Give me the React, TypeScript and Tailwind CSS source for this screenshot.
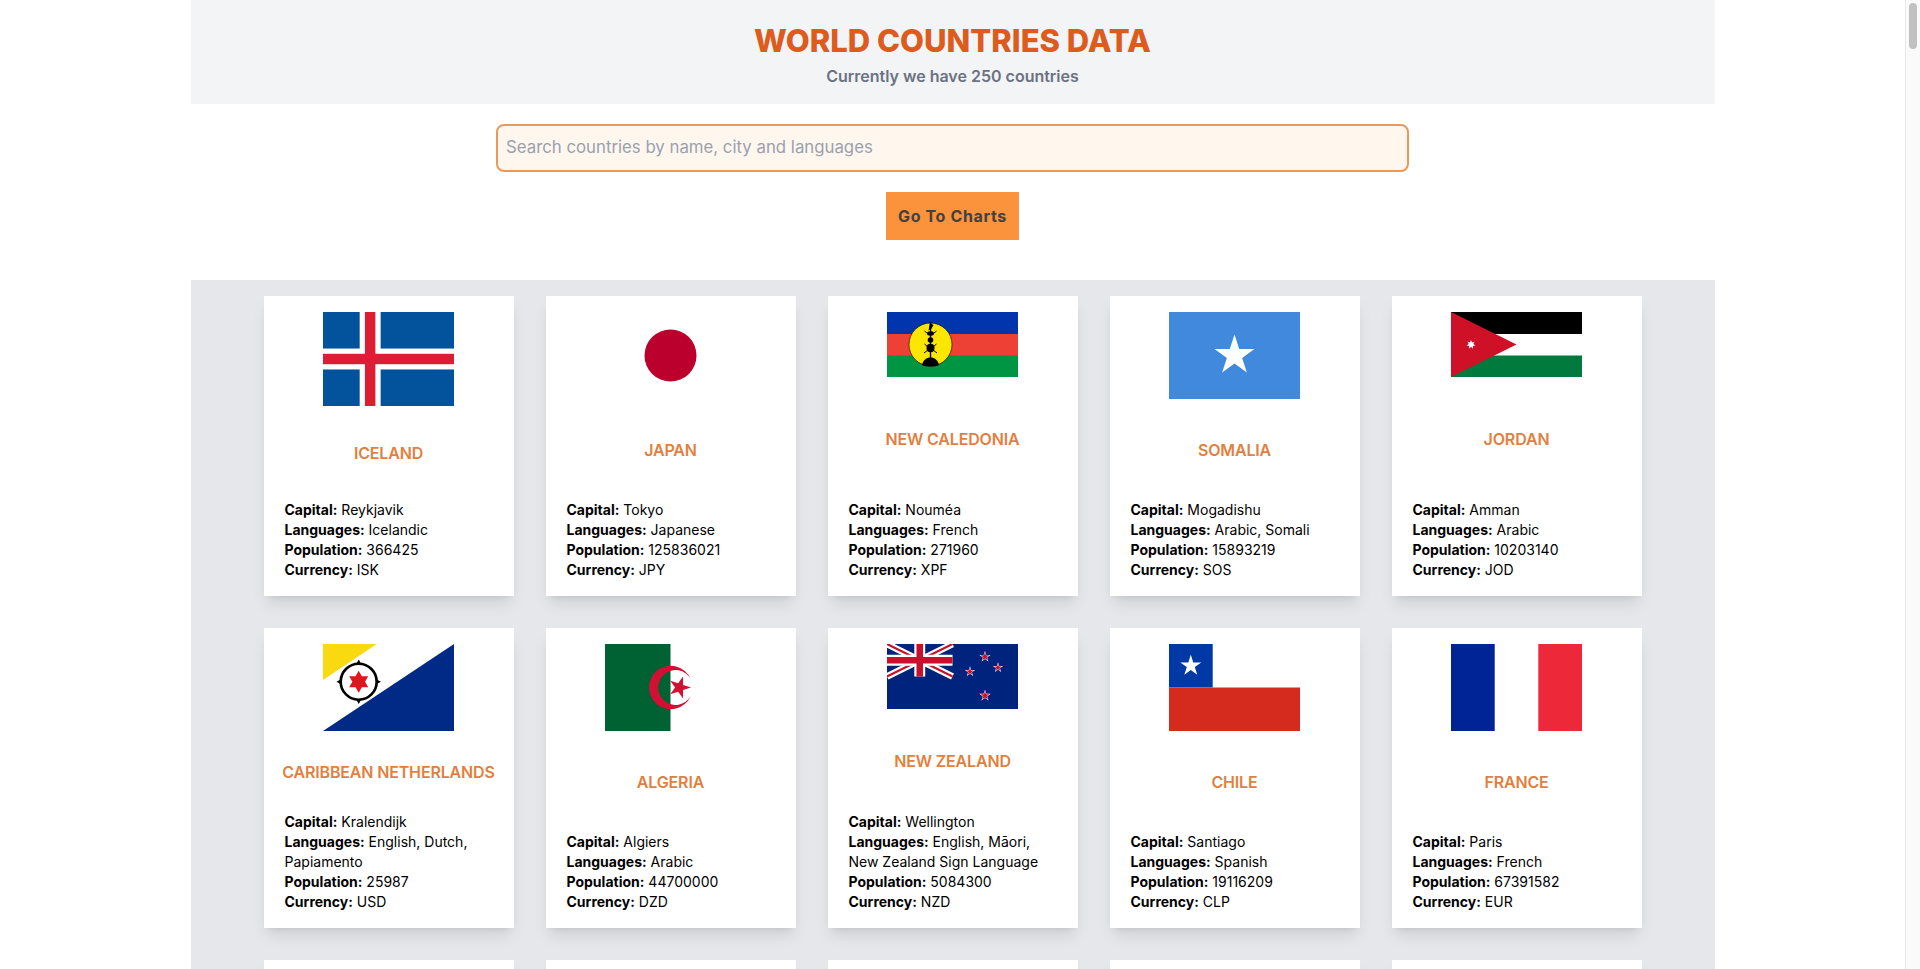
import type { ReactNode } from "react";

function starPoints(cx: number, cy: number, r: number, n = 5, inner = 0.382) {
  const pts: string[] = [];
  for (let i = 0; i < n * 2; i++) {
    const rad = i % 2 === 0 ? r : r * inner;
    const a = -Math.PI / 2 + (i * Math.PI) / n;
    pts.push(`${(cx + rad * Math.cos(a)).toFixed(2)},${(cy + rad * Math.sin(a)).toFixed(2)}`);
  }
  return pts.join(" ");
}

const Iceland = (
  <svg className="block" width="131" height="94" viewBox="0 0 25 18" preserveAspectRatio="none">
    <rect width="25" height="18" fill="#02529c" />
    <rect x="7" width="4" height="18" fill="#fff" />
    <rect y="7" width="25" height="4" fill="#fff" />
    <rect x="8" width="2" height="18" fill="#dc1e35" />
    <rect y="8" width="25" height="2" fill="#dc1e35" />
  </svg>
);

const Japan = (
  <svg className="block" width="131" height="87" viewBox="0 0 131 87">
    <rect width="131" height="87" fill="#fff" />
    <circle cx="65.5" cy="43.5" r="26" fill="#bc002d" />
  </svg>
);

const NewCaledonia = (
  <svg className="block" width="131" height="65" viewBox="0 0 131 65">
    <rect width="131" height="22" fill="#0035ad" />
    <rect y="22" width="131" height="22" fill="#ed4135" />
    <rect y="43.5" width="131" height="21.5" fill="#009543" />
    <circle cx="43.5" cy="32.5" r="21.500" fill="#fae600" stroke="#000" strokeWidth="0.6" />
    <path d="M43.5 10.500V47" stroke="#000" strokeWidth="1.4" />
    <path d="M43 11l3.500 2-2 3.500-3 2z" fill="#000" />
    <ellipse cx="43.5" cy="21.500" rx="3.500" ry="2.200" fill="#000" />
    <ellipse cx="43.5" cy="28" rx="2.800" ry="2.800" fill="#000" />
    <ellipse cx="43.5" cy="36" rx="4" ry="4.200" fill="#000" />
    <path d="M37.500 19l3 2.500M49.500 19l-3 2.500M37.500 32l3.500 3M49.500 32l-3.500 3M37 41l4-3M50 41l-4-3" stroke="#000" strokeWidth="1" />
    <path d="M35 53c1-5 4.500-7.500 8.500-7.500s7.500 2.500 8.500 7.500c-2 1-5.500 1.500-8.500 1.500s-6.500-.5-8.500-1.500z" fill="#000" />
  </svg>
);

const Somalia = (
  <svg className="block" width="131" height="87" viewBox="0 0 131 87">
    <rect width="131" height="87" fill="#4189dd" />
    <polygon points={starPoints(65.5, 43.5, 21)} fill="#fff" />
  </svg>
);

const Jordan = (
  <svg className="block" width="131" height="65" viewBox="0 0 131 65">
    <rect width="131" height="22" fill="#000" />
    <rect y="22" width="131" height="22" fill="#fff" />
    <rect y="43.5" width="131" height="21.5" fill="#007a3d" />
    <polygon points="0,0 65.500,32.500 0,65" fill="#ce1126" />
    <polygon points={starPoints(20, 32.5, 4.6, 7, 0.5)} fill="#fff" />
  </svg>
);

const Bonaire = (
  <svg className="block" width="131" height="87" viewBox="0 0 131 87">
    <rect width="131" height="87" fill="#fff" />
    <polygon points="0,0 53.700,0 0,36" fill="#f9d90f" />
    <polygon points="131,0 131,87 0,87" fill="#012a87" />
    <circle cx="35.700" cy="37.700" r="18" fill="#fff" stroke="#000" strokeWidth="2.600" />
    <polygon points="35.700,15.500 38.500,20.500 32.900,20.500" fill="#000" />
    <polygon points="35.700,59.900 38.500,54.900 32.900,54.900" fill="#000" />
    <polygon points="13.500,37.700 18.500,34.900 18.500,40.500" fill="#000" />
    <polygon points="57.900,37.700 52.900,34.900 52.900,40.500" fill="#000" />
    <polygon points={starPoints(35.7, 37.7, 11, 6, 0.577)} fill="#dc171d" />
  </svg>
);

const Algeria = (
  <svg className="block" width="131" height="87" viewBox="0 0 131 87">
    <rect width="131" height="87" fill="#fff" />
    <rect width="65.500" height="87" fill="#006233" />
    <path d="M85.600 34.800A21.700 21.700 0 1 0 85.600 52.200A17.400 17.400 0 1 1 85.600 34.800Z" fill="#d21034" />
    <polygon points={starPoints(74.5, 43.5, 11.5)} transform="rotate(90 74.500 43.500)" fill="#d21034" />
  </svg>
);

const nzStars: [number, number, number][] = [
  [98, 12.7, 4.8],
  [111, 23.7, 4.4],
  [83, 27.7, 4.4],
  [98, 51.7, 5],
];

const NewZealand = (
  <svg className="block" width="131" height="65" viewBox="0 0 131 65">
    <rect width="131" height="65" fill="#00247d" />
    <g transform="scale(1.092 1.083)">
      <path d="M0 0L60 30M60 0L0 30" stroke="#fff" strokeWidth="6" />
      <path d="M0 0L60 30M60 0L0 30" stroke="#c8102e" strokeWidth="2" />
      <path d="M30 0V30M0 15H60" stroke="#fff" strokeWidth="10" />
      <path d="M30 0V30M0 15H60" stroke="#c8102e" strokeWidth="6" />
    </g>
    {nzStars.map(([x, y, r]) => (
      <g key={`${x}-${y}`}>
        <polygon points={starPoints(x, y, r + 1)} fill="#fff" />
        <polygon points={starPoints(x, y, r - 0.3)} fill="#c8102e" />
      </g>
    ))}
  </svg>
);

const Chile = (
  <svg className="block" width="131" height="87" viewBox="0 0 131 87">
    <rect width="131" height="43.500" fill="#fff" />
    <rect width="43.700" height="43.500" fill="#0039a6" />
    <rect y="43.500" width="131" height="43.500" fill="#d52b1e" />
    <polygon points={starPoints(21.8, 21.8, 11)} fill="#fff" />
  </svg>
);

const France = (
  <svg className="block" width="131" height="87" viewBox="0 0 131 87">
    <rect width="131" height="87" fill="#fff" />
    <rect width="43.700" height="87" fill="#002395" />
    <rect x="87.300" width="43.700" height="87" fill="#ed2939" />
  </svg>
);

type Country = {
  name: string;
  flag: ReactNode;
  capital: string;
  languages: string;
  population: number;
  currency: string;
};

const countries: Country[] = [
  { name: "ICELAND", flag: Iceland, capital: "Reykjavik", languages: "Icelandic", population: 366425, currency: "ISK" },
  { name: "JAPAN", flag: Japan, capital: "Tokyo", languages: "Japanese", population: 125836021, currency: "JPY" },
  { name: "NEW CALEDONIA", flag: NewCaledonia, capital: "Nouméa", languages: "French", population: 271960, currency: "XPF" },
  { name: "SOMALIA", flag: Somalia, capital: "Mogadishu", languages: "Arabic, Somali", population: 15893219, currency: "SOS" },
  { name: "JORDAN", flag: Jordan, capital: "Amman", languages: "Arabic", population: 10203140, currency: "JOD" },
  { name: "CARIBBEAN NETHERLANDS", flag: Bonaire, capital: "Kralendijk", languages: "English, Dutch, Papiamento", population: 25987, currency: "USD" },
  { name: "ALGERIA", flag: Algeria, capital: "Algiers", languages: "Arabic", population: 44700000, currency: "DZD" },
  { name: "NEW ZEALAND", flag: NewZealand, capital: "Wellington", languages: "English, Māori, New Zealand Sign Language", population: 5084300, currency: "NZD" },
  { name: "CHILE", flag: Chile, capital: "Santiago", languages: "Spanish", population: 19116209, currency: "CLP" },
  { name: "FRANCE", flag: France, capital: "Paris", languages: "French", population: 67391582, currency: "EUR" },
];

function Card({ c }: { c: Country }) {
  return (
    <div className="flex h-[300px] w-[250px] flex-col bg-white pt-4 pb-4 shadow-lg">
      <div className="mx-auto w-[131px]">{c.flag}</div>
      <div className="flex flex-1 items-center justify-center">
        <h2 className="text-center text-base font-semibold tracking-[-0.01em] text-[#e27f3e]">{c.name}</h2>
      </div>
      <div className="px-[21px] text-sm leading-5 text-black">
        <p><span className="font-bold">Capital:</span> {c.capital}</p>
        <p><span className="font-bold">Languages:</span> {c.languages}</p>
        <p><span className="font-bold">Population:</span> {c.population}</p>
        <p><span className="font-bold">Currency:</span> {c.currency}</p>
      </div>
    </div>
  );
}

export default function App() {
  return (
    <div className="flex h-screen overflow-hidden bg-white font-['Inter',sans-serif]">
      <main className="h-full min-w-0 flex-1 overflow-hidden">
        <div className="mx-auto w-4/5">
          <header className="bg-gray-100 pt-[23px] pb-4 text-center">
            <h1 className="text-[31px] leading-9 font-extrabold text-[#dd5b1d]">WORLD COUNTRIES DATA</h1>
            <p className="mt-[5px] text-base font-semibold text-gray-500">Currently we have 250 countries</p>
          </header>
          <div className="mt-5 flex justify-center">
            <input
              readOnly
              placeholder="Search countries by name, city and languages"
              className="h-12 w-[913px] rounded-lg border-2 border-[#e9995a] bg-orange-50 px-2 pb-0.5 text-[16.8px] outline-none placeholder:text-gray-400"
            />
          </div>
          <div className="mt-5 flex justify-center">
            <button className="h-12 w-[133px] bg-[#fb923c] text-base font-bold tracking-[0.04em] text-[#44403c]">Go To Charts</button>
          </div>
          <section className="mt-10 flex flex-wrap justify-center gap-8 bg-gray-200 pt-4 pb-8">
            {countries.map((c) => (
              <Card key={c.name} c={c} />
            ))}
            {[0, 1, 2, 3, 4].map((i) => (
              <div key={i} className="h-[300px] w-[250px] bg-white shadow-lg" />
            ))}
          </section>
        </div>
      </main>
      <aside className="h-full w-[15px] flex-none border-l border-[#e8e8e8] bg-[#fafafa] pt-[3px] pl-[3px]">
        <div className="h-[46px] w-2 rounded-full bg-[#c1c1c1]" />
      </aside>
    </div>
  );
}
